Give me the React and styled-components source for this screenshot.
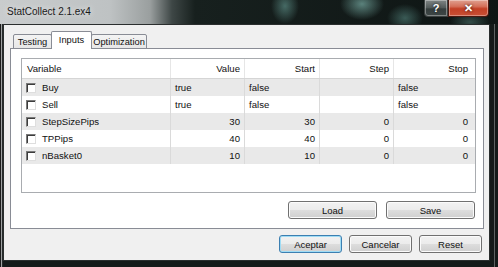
import styled, { createGlobalStyle } from 'styled-components';

const Global = createGlobalStyle`
  html, body {
    margin: 0;
    padding: 0;
    background: #151b1a;
  }
  * { box-sizing: border-box; }
`

const Window = styled.div`
  width: 498px;
  height: 267px;
  display: flex;
  flex-direction: column;
  font-family: "Liberation Sans", Arial, sans-serif;
  color: #111;
  background:
    linear-gradient(90deg, #1c1c1c 0 1px, #9ea1a2 1px 2px, #262a2a 2px 3px, transparent 3px),
    linear-gradient(90deg, transparent calc(100% - 4px), #5d6262 calc(100% - 4px) calc(100% - 3px), transparent calc(100% - 3px)),
    #141a19;
`

const TitleBar = styled.div`
  height: 24px;
  flex: none;
  display: flex;
  align-items: flex-start;
  justify-content: space-between;
  padding: 0 9px 0 7px;
  background:
    radial-gradient(ellipse 14px 18px at 285px 6px, rgba(130, 200, 190, 0.45), transparent),
    radial-gradient(ellipse 22px 16px at 362px 4px, rgba(150, 215, 205, 0.55), transparent),
    radial-gradient(ellipse 18px 14px at 405px 18px, rgba(120, 190, 180, 0.4), transparent),
    radial-gradient(ellipse 20px 10px at 470px 22px, rgba(120, 180, 170, 0.35), transparent),
    linear-gradient(90deg, #c9cccd 0, #bec2c3 110px, #9a9f9f 150px, #3e4746 172px, #17201e 195px, #0e1514 100%);
`

const Title = styled.span`
  font-size: 10px;
  line-height: 24px;
  color: #1a1a1a;
  text-shadow: 0 0 6px rgba(255, 255, 255, 0.8);
`

const Captions = styled.div`
  display: flex;
`

const CaptionButton = styled.div`
  height: 17px;
  width: ${p => p.$w}px;
  display: flex;
  align-items: center;
  justify-content: center;
  font-size: 11px;
  font-weight: bold;
  color: #fff;
  border: 1px solid ${p => (p.$close ? '#4a1810' : '#3b4140')};
  border-top: none;
  border-radius: ${p => (p.$close ? '0 0 4px 0' : '0 0 0 4px')};
  box-shadow: inset 0 0 0 1px rgba(255, 255, 255, 0.35);
  text-shadow: 0 0 3px rgba(0, 0, 0, 0.8);
  background: ${p =>
    p.$close
      ? 'linear-gradient(#e0a090 0%, #d4705a 40%, #c23f25 55%, #c85036 100%)'
      : 'linear-gradient(rgba(220,225,225,0.55) 0%, rgba(160,170,170,0.45) 50%, rgba(90,100,100,0.5) 55%, rgba(120,130,130,0.45) 100%)'};
`

const Client = styled.div`
  flex: none;
  margin-left: 3px;
  width: 487px;
  height: 237px;
  border: 1px solid #2a2e2e;
  background: #f0f0f0;
  padding: 6px 4px 7px 6px;
  display: flex;
  flex-direction: column;
`

const TabStrip = styled.div`
  display: flex;
  align-items: flex-end;
  height: 18px;
  padding-left: 3px;
  position: relative;
  z-index: 1;
`

const Tab = styled.div`
  width: ${p => p.$w}px;
  height: ${p => (p.$active ? 18 : 15)}px;
  margin-left: ${p => (p.$first ? 0 : -1)}px;
  border: 1px solid #898c95;
  border-bottom: ${p => (p.$active ? 'none' : '1px solid #898c95')};
  border-radius: 2px 2px 0 0;
  background: ${p => (p.$active ? '#ffffff' : 'linear-gradient(#f4f4f4, #e7e7e7)')};
  font-size: 9.3px;
  display: flex;
  align-items: center;
  justify-content: center;
  padding-bottom: ${p => (p.$active ? 2 : 0)}px;
  position: relative;
  z-index: ${p => (p.$active ? 2 : 1)};
`

const Panel = styled.div`
  margin-top: -1px;
  width: 474px;
  height: 181px;
  border: 1px solid #898c95;
  background: #ffffff;
  padding: 9px 7px 8px 10px;
  display: flex;
  flex-direction: column;
`

const Grid = styled.div`
  width: 455px;
  height: 135px;
  border: 1px solid #a9acb0;
  background: #ffffff;
  font-size: 9.6px;
`

const Row = styled.div`
  display: grid;
  grid-template-columns: 149px 74px 75px 74px 81px;
  height: ${p => (p.$header ? 20 : 17)}px;
  background: ${p => (p.$shade ? '#e9e9e9' : '#ffffff')};
  border-bottom: ${p => (p.$header ? '1px solid #d5d5d5' : 'none')};
`

const Cell = styled.div`
  display: flex;
  align-items: center;
  justify-content: ${p => (p.$right ? 'flex-end' : 'flex-start')};
  padding: 0 ${p => p.$pr ?? 4}px 0 ${p => p.$pl ?? 4}px;
  border-right: 1px solid ${p => (p.$last ? 'transparent' : p.$header ? '#e6e6e6' : '#dadada')};
  white-space: nowrap;
  overflow: hidden;
`

const Check = styled.span`
  width: 10px;
  height: 10px;
  flex: none;
  margin-right: 6px;
  background: #fff;
  border: 1px solid;
  border-color: #7a7a7a #dedede #dedede #7a7a7a;
  box-shadow: inset 1px 1px 0 #3c3c3c;
`

const ButtonRow = styled.div`
  display: flex;
  justify-content: flex-end;
  gap: ${p => p.$gap}px;
  margin-top: ${p => p.$mt}px;
  padding-right: ${p => p.$pr}px;
`

const Button = styled.div`
  width: ${p => p.$w}px;
  height: 18px;
  display: flex;
  align-items: center;
  justify-content: center;
  font-size: 9.5px;
  color: #111;
  border: 1px solid ${p => (p.$default ? '#3c7fb1' : '#707070')};
  border-radius: 3px;
  background: linear-gradient(#f2f2f2 0%, #ebebeb 50%, #dddddd 51%, #cfcfcf 100%);
  box-shadow: inset 0 0 0 1px ${p => (p.$default ? '#9fdcf5' : '#fbfbfb')};
`

const columns = [
  { label: 'Variable', right: false },
  { label: 'Value', right: true },
  { label: 'Start', right: true },
  { label: 'Step', right: true },
  { label: 'Stop', right: true, pr: 6 },
]

const rows = [
  { name: 'Buy', value: 'true', start: 'false', step: '', stop: 'false', num: false },
  { name: 'Sell', value: 'true', start: 'false', step: '', stop: 'false', num: false },
  { name: 'StepSizePips', value: '30', start: '30', step: '0', stop: '0', num: true },
  { name: 'TPPips', value: '40', start: '40', step: '0', stop: '0', num: true },
  { name: 'nBasket0', value: '10', start: '10', step: '0', stop: '0', num: true },
]

const App = () => {
  return (
    <>
      <Global />
      <Window>
        <TitleBar>
          <Title>StatCollect 2.1.ex4</Title>
          <Captions>
            <CaptionButton $w={24}>?</CaptionButton>
            <CaptionButton $w={41} $close>✕</CaptionButton>
          </Captions>
        </TitleBar>
        <Client>
          <TabStrip>
            <Tab $w={39} $first>Testing</Tab>
            <Tab $w={41} $active>Inputs</Tab>
            <Tab $w={56}>Optimization</Tab>
          </TabStrip>
          <Panel>
            <Grid>
              <Row $header>
                {columns.map((c, i) => (
                  <Cell key={c.label} $header $right={c.right} $pr={c.pr} $pl={i === 0 ? 5 : 4} $last={i === 4}>
                    {c.label}
                  </Cell>
                ))}
              </Row>
              {rows.map((r, i) => (
                <Row key={r.name} $shade={i % 2 === 0}>
                  <Cell>
                    <Check />
                    {r.name}
                  </Cell>
                  <Cell $right={r.num}>{r.value}</Cell>
                  <Cell $right={r.num}>{r.start}</Cell>
                  <Cell $right={r.num}>{r.step}</Cell>
                  <Cell $right={r.num} $pr={6} $last>{r.stop}</Cell>
                </Row>
              ))}
            </Grid>
            <ButtonRow $gap={9} $mt={8} $pr={1}>
              <Button $w={89}>Load</Button>
              <Button $w={89}>Save</Button>
            </ButtonRow>
          </Panel>
          <ButtonRow $gap={7} $mt={6} $pr={3}>
            <Button $w={63} $default>Aceptar</Button>
            <Button $w={63}>Cancelar</Button>
            <Button $w={63}>Reset</Button>
          </ButtonRow>
        </Client>
      </Window>
    </>
  )
}

export default App;
